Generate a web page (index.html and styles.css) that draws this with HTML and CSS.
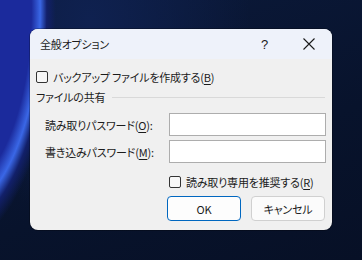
FILE: index.html
```html
<!DOCTYPE html>
<html lang="ja">
<head>
<meta charset="utf-8">
<link rel="stylesheet" href="styles.css">
</head>
<body>
<div class="dialog">
  <div class="titlebar">
    <span class="title">全般オプション</span>
    <span class="help">?</span>
    <svg class="close" width="12" height="12" viewBox="0 0 12 12"><path d="M0.5 0.5 L11.5 11.5 M11.5 0.5 L0.5 11.5" stroke="#1a1a1a" stroke-width="1.1" fill="none"/></svg>
  </div>
  <div class="content">
    <label class="check-row">
      <span class="box"></span>
      <span>バックアップ ファイルを作成する(<u>B</u>)</span>
    </label>
    <div class="group-head">
      <span>ファイルの共有</span>
      <span class="rule"></span>
    </div>
    <div class="field-row">
      <span class="label">読み取りパスワード(<u>O</u>):</span>
      <span class="input"></span>
    </div>
    <div class="field-row second">
      <span class="label">書き込みパスワード(<u>M</u>):</span>
      <span class="input"></span>
    </div>
    <label class="check-row ro">
      <span class="box"></span>
      <span>読み取り専用を推奨する(<u>R</u>)</span>
    </label>
    <div class="buttons">
      <span class="btn primary">OK</span>
      <span class="btn">キャンセル</span>
    </div>
  </div>
</div>
</body>
</html>
```
FILE: styles.css
```css
html, body {
  margin: 0;
  padding: 0;
  width: 362px;
  height: 260px;
  overflow: hidden;
}
body {
  font-family: "Noto Sans CJK JP", "Noto Sans", sans-serif;
  font-size: 11px;
  letter-spacing: -0.2px;
  font-feature-settings: "palt";
  color: #1b1b1b;
  white-space: nowrap;
  background:
    radial-gradient(ellipse 110px 250px at -50px 10px, #1b2a9c 0 74%, #3a67e6 82%, #12206a 88%, rgba(8,18,50,0) 96%),
    radial-gradient(ellipse 160px 200px at 90px 20px, #0f2150 0, rgba(10,22,55,0) 100%),
    linear-gradient(160deg, #0b1a3c 0, #08132c 60%, #071026 100%);
  padding-top: 29px;
  padding-left: 30px;
  box-sizing: border-box;
}
.dialog {
  width: 302px;
  height: 201px;
  background: #f0f0f0;
  border-radius: 8px;
  overflow: hidden;
  display: flex;
  flex-direction: column;
  box-shadow: 0 0 0 1px rgba(0,0,0,0.25);
}
.titlebar {
  height: 30px;
  background: #eef2fa;
  display: flex;
  align-items: center;
  padding-left: 10px;
  flex-shrink: 0;
}
.title {
  flex: 1;
  line-height: 16px;
}
.help {
  font-family: "Liberation Sans", sans-serif;
  font-size: 13px;
  width: 12px;
  margin-right: 30px;
}
.close {
  margin-right: 17px;
}
.content {
  display: flex;
  flex-direction: column;
  padding: 0 6px 0 6px;
}
.check-row {
  display: flex;
  align-items: center;
  height: 16px;
  line-height: 16px;
  margin-top: 10px;
  gap: 5px;
}
.box {
  width: 10px;
  height: 10px;
  border: 1px solid #333;
  border-radius: 2px;
  background: #f7f7f7;
  flex-shrink: 0;
}
u {
  text-decoration-thickness: 1px;
  text-underline-offset: 2px;
}
.group-head {
  display: flex;
  align-items: center;
  height: 16px;
  line-height: 16px;
  margin-top: 4px;
  gap: 7px;
}
.rule {
  flex: 1;
  height: 1px;
  background: #d9d9d9;
  margin-right: 1px;
}
.field-row {
  display: flex;
  align-items: center;
  height: 23px;
  margin-top: 8px;
}
.field-row.second {
  margin-top: 4px;
}
.label {
  width: 124px;
  padding-left: 9px;
  line-height: 16px;
}
.input {
  width: 155px;
  height: 21px;
  border: 1px solid #adadad;
  background: #fff;
}
.check-row.ro {
  margin-top: 11px;
  margin-left: 133px;
}
.buttons {
  display: flex;
  justify-content: flex-end;
  gap: 10px;
  margin-top: 6px;
  padding-right: 1px;
}
.btn {
  width: 72px;
  height: 23px;
  border: 1px solid #d0d0d0;
  border-radius: 4px;
  background: #fbfbfb;
  display: flex;
  align-items: center;
  justify-content: center;
  line-height: 16px;
}
.btn.primary {
  border-color: #0067c0;
  background: #fdfdfd;
}
```
